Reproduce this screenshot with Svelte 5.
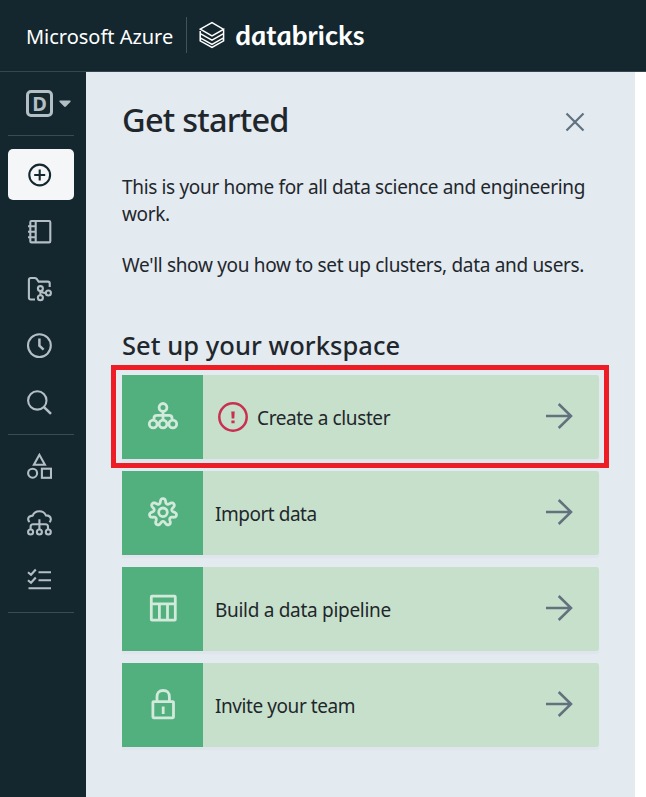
<script>
  const steps = [
    { icon: 'cluster', label: 'Create a cluster', alert: true, spacing: -0.38 },
    { icon: 'gear', label: 'Import data', spacing: -0.48 },
    { icon: 'table', label: 'Build a data pipeline', spacing: -0.3 },
    { icon: 'lock', label: 'Invite your team', spacing: -0.43 }
  ];

  // Seven-toothed cog outline, traced as a closed polar curve
  const teeth = 7;
  const gear = 'M' + Array.from({ length: 168 }, (_, i) => {
    const t = (i / 168) * Math.PI * 2;
    const wave = Math.tanh(1.4 * Math.cos(teeth * t)) / Math.tanh(1.4);
    const r = 11.4 + 2.3 * wave;
    return `${(16 + r * Math.sin(t)).toFixed(2)} ${(16.3 - r * Math.cos(t)).toFixed(2)}`;
  }).join('L') + 'z';
</script>

<div class="app">
  <header>
    <span class="azure">Microsoft Azure</span>
    <span class="bar"></span>
    <svg class="stack" width="26" height="28" viewBox="0 0 26 28">
      <path d="M24.2 9.8V8.2L13 1.6 1.2 8.2 13 15l11.6-6.6v4.2L13 19.2 1.2 12.6V10M1.2 12.6v4.3L13 23.3l11.6-6.5v-4M1.2 16.4v3.5L13 26.5l11.6-6.6v-3.4" />
    </svg>
    <span class="brand">databricks</span>
  </header>

  <div class="body">
    <nav>
      <div class="switcher">
        <span class="dbox">D</span>
        <svg width="12" height="8" viewBox="0 0 12 8"><path d="M.8.6h10.4q.9.5.1 1.3L6.9 6.6q-.9.8-1.8 0L.7 1.9Q0 1.1.8.6z" fill="#b3bfc5" /></svg>
      </div>
      <hr />
      <button class="create" aria-label="Create">
        <svg width="24" height="24" viewBox="0 0 24 24"><circle cx="11.7" cy="12" r="10.4" /><path d="M11.7 6.5v11M6.2 12h11" /></svg>
      </button>
      <ul class="first">
        <li>
          <svg width="26" height="26" viewBox="0 0 26 26"><rect x="4.3" y="2" width="20" height="21.4" rx="1.2" /><path d="M9.7 2v21.4M2 7.3h7.7M2 12.7h7.7M2 18.2h7.7" /></svg>
        </li>
        <li>
          <svg width="26" height="26" viewBox="0 0 26 26"><path d="M9 23.5H4.8Q2.9 23.5 2.9 21.5V4Q2.9 2 4.8 2h3.9q1.2 0 2 1l1.9 2.6h9.3q1.8 0 1.8 1.8v3.6" /><circle cx="14.4" cy="12.6" r="2.5" /><circle cx="14.4" cy="21.8" r="2.5" /><circle cx="22.4" cy="17" r="2.5" /><path d="M14.4 15v4.4M14.9 15.2q1.5 2 5 1.8" /></svg>
        </li>
        <li>
          <svg width="26" height="26" viewBox="0 0 26 26"><circle cx="13.4" cy="12.6" r="11.4" /><path d="M13.4 5.5v7.2l4.2 4" stroke-width="2.5" /></svg>
        </li>
        <li>
          <svg width="26" height="26" viewBox="0 0 26 26"><circle cx="11.3" cy="10.4" r="9.2" /><path d="M18 17.1 25 23.9" stroke-width="2.6" /></svg>
        </li>
      </ul>
      <hr />
      <ul class="second">
        <li>
          <svg width="26" height="28" viewBox="0 0 26 28"><path d="M13.4 2.8 7.9 12.7h11z" /><circle cx="6.6" cy="21.2" r="4.5" /><rect x="15.9" y="16.7" width="9.1" height="9.1" /></svg>
        </li>
        <li>
          <svg width="26" height="26" viewBox="0 0 26 26"><path d="M3.6 12.1Q2 10.6 2.2 8.7 2.5 6 6.7 5.6 8.4 1.3 13.3 1.3t6.6 4.1q4.6.2 4.9 3.4.2 1.8-1.3 3.4" /><path d="M13.4 9.2V19M4.6 19v-2.3q0-2.5 2.5-2.5h12.4q2.5 0 2.5 2.5V19" /><circle cx="4.6" cy="22" r="2.5" /><circle cx="13.4" cy="22" r="2.5" /><circle cx="22.3" cy="22" r="2.5" /></svg>
        </li>
        <li>
          <svg width="26" height="24" viewBox="0 0 26 24"><path d="M2 4.3 5 6.8 9.8 1.5M2 12.3l3 2.5L9.8 9.5M12.5 4.3H25M12.5 12.2H25M2.5 20.2H25" /></svg>
        </li>
      </ul>
      <hr />
    </nav>

    <main>
      <div class="top">
        <h1>Get started</h1>
        <svg width="20" height="20" viewBox="0 0 20 20"><path d="M1.5 1.5 18.5 18.5M18.5 1.5 1.5 18.5" stroke="#5f7281" stroke-width="2.2" fill="none" /></svg>
      </div>
      <p class="p1">This is your home for all data science and engineering<br />work.</p>
      <p class="p2">We'll show you how to set up clusters, data and users.</p>
      <h2>Set up your workspace</h2>

      <div class="steps">
        {#each steps as s}
          <div class="step" class:marked={s.alert}>
            <div class="tile">
              {#if s.icon === 'cluster'}
                <svg width="32" height="32" viewBox="0 0 32 32"><circle cx="16" cy="7.4" r="3.9" /><path d="M16 11v9M7 19v-1q0-2.7 3-2.7h12q3 0 3 2.7v1" /><circle cx="6.2" cy="24" r="3.9" /><circle cx="16" cy="24" r="3.9" /><circle cx="25.8" cy="24" r="3.9" /></svg>
              {:else if s.icon === 'gear'}
                <svg width="32" height="32" viewBox="0 0 32 32"><circle cx="16" cy="16.3" r="4.3" /><path d={gear} stroke-linejoin="round" /></svg>
              {:else if s.icon === 'table'}
                <svg width="32" height="32" viewBox="0 0 32 32"><rect x="4.3" y="4.2" width="24" height="24" rx=".7" /><path d="M4.3 11.8h24M12.4 12v16M20.5 12v16" /></svg>
              {:else}
                <svg width="32" height="32" viewBox="0 0 32 32"><rect x="5.9" y="13.6" width="20.6" height="16.2" rx=".7" /><path d="M10 13.6V9q0-6.5 6.2-6.5T22.4 9v4.6M16.2 18.5v7.5" /></svg>
              {/if}
            </div>
            {#if s.alert}
              <svg class="alert" width="30" height="30" viewBox="0 0 30 30"><circle cx="15" cy="15" r="13.7" fill="none" stroke="#c9304f" stroke-width="2.5" /><path d="M13.3 9.5h3.4l-.4 7h-2.6zM13.4 18.6h3.2v2.6h-3.2z" fill="#c9304f" /></svg>
            {/if}
            <span class="label" style="letter-spacing: {s.spacing}px">{s.label}</span>
            <svg class="arrow" width="28" height="28" viewBox="0 0 28 28"><path d="M1 14h25M13.7 2 26 14 13.7 26" fill="none" stroke="#61717d" stroke-width="2.5" /></svg>
          </div>
        {/each}
      </div>
    </main>
  </div>
</div>

<style>
  :global(body) { margin: 0; background: #fff; }
  .app {
    width: 646px; height: 797px; overflow: hidden;
    display: flex; flex-direction: column;
    font-family: 'Noto Sans', 'Open Sans', sans-serif; color: #1f272d;
    white-space: nowrap;
  }
  header {
    box-sizing: border-box; height: 72px; flex: none;
    display: flex; align-items: center; padding-left: 26px;
    background: #14272e; border-bottom: 1px solid #35464d;
  }
  .azure { width: 160px; color: #fff; font-size: 20px; letter-spacing: -0.02px; padding-top: 1px; }
  .bar { width: 1px; height: 36px; margin-top: -1px; background: #435258; }
  .stack { margin: 0 0 1px 12px; fill: none; stroke: #fff; stroke-width: 1.5; }
  /* The italic cut has the single-storey "a"; the skew sets it upright */
  .brand {
    margin: 0 0 2px 10px; color: #fff; font: italic 700 27px/30px Lato, sans-serif;
    transform: scaleX(1.08) skewX(8deg); transform-origin: 0 50%;
  }
  .body { flex: 1; display: flex; }
  nav { box-sizing: border-box; width: 86px; padding: 18px 12px 0 8px; background: #14272e; }
  nav hr { height: 1px; margin: 0; border: 0; background: #3a4b52; }
  .switcher { display: flex; align-items: center; height: 27px; padding-left: 18px; gap: 6px; margin-bottom: 18px; }
  .dbox {
    box-sizing: border-box; width: 27px; height: 27px; border: 3px solid #b3bfc5; border-radius: 5px;
    color: #b3bfc5; font-size: 20px; line-height: 21px; font-weight: 700; text-align: center;
  }
  .create {
    display: flex; align-items: center; justify-content: center; width: 66px; height: 51px;
    margin: 13px 0 0; padding: 0 3px 0 0; border: 0; border-radius: 5px; background: #f4f6f8;
  }
  .create svg { fill: none; stroke: #14272e; stroke-width: 2.1; }
  ul { list-style: none; margin: 0; padding: 0; }
  li { height: 57px; display: flex; align-items: center; padding-left: 18px; }
  li svg { fill: none; stroke: #b3bfc5; stroke-width: 2.1; }
  .first { padding: 3px 0 3px; }
  .second { padding: 3px 0 4px; }
  .second li { height: 56.7px; }
  main { box-sizing: border-box; width: 549px; padding: 24px 36px 0; background: #e3eaf0; }
  .top { display: flex; justify-content: space-between; align-items: center; padding-right: 14px; height: 48px; }
  .top svg { margin-top: 4px; }
  h1 { margin: -1px 0 0; font-size: 32.5px; font-weight: 500; line-height: 48px; letter-spacing: -0.75px; }
  p { margin: 0; font-size: 19px; line-height: 27px; letter-spacing: -0.34px; }
  .p1 { margin-top: 30px; }
  .p2 { margin-top: 24px; letter-spacing: -0.32px; }
  h2 { margin: 48px 0 0; font-size: 25.5px; font-weight: 500; line-height: 36px; letter-spacing: 0.05px; }
  .steps { display: flex; flex-direction: column; gap: 12px; margin-top: 12px; }
  .step {
    position: relative; display: flex; align-items: center; height: 84px;
    background: #c7e0cb; border-radius: 0 3px 3px 0; box-shadow: 0 3px 1px #dfe5ed;
  }
  .marked::after { content: ''; position: absolute; inset: -10px -10px -9px -11px; border: 5px solid #ee1c25; }
  .tile { width: 81px; height: 84px; display: flex; align-items: center; justify-content: center; background: #52af7e; }
  .tile svg { fill: none; stroke: #d1eadb; stroke-width: 2.8; margin-bottom: 3px; }
  .alert { margin-left: 15px; margin-right: -3px; }
  .label { flex: 1; padding-left: 12px; font-size: 19px; line-height: 27px; padding-top: 3px; }
  .arrow { margin: 0 26px 2px 0; }
</style>
